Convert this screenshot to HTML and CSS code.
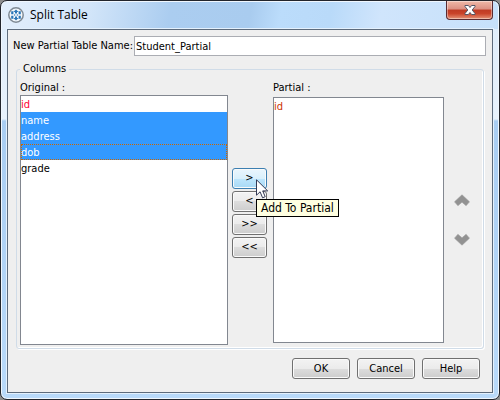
FILE: index.html
```
<!DOCTYPE html>
<html lang="en">
<head>
    <meta charset="UTF-8">
    <meta name="viewport" content="width=device-width, initial-scale=1.0">
    <title>Split Table</title>
    <link rel="stylesheet" href="styles.css">
</head>
<body>
    <div class="window">
        <header class="titlebar">
            <svg class="app-icon" width="16" height="16" viewBox="0 0 16 16">
                <circle cx="8" cy="8" r="7.2" fill="#f4f8fb" stroke="#7f8a94" stroke-width="1.5"/>
                <g fill="#2a76b8">
                    <path d="M8 2.4L10.6 5H9v1.6H7V5H5.4z"/>
                    <path d="M8 13.6L10.6 11H9V9.400H7V11H5.400z"/>
                    <path d="M3.200 4.200h2.200v3H3.200zM10.600 4.200h2.200v3h-2.200zM3.200 8.800h2.200v3H3.200zM10.600 8.800h2.200v3h-2.200z"/>
                    <path d="M6.200 7.200h1v1.600h-1zM8.800 7.200h1v1.600h-1z"/>
                </g>
            </svg>
            <h1>Split Table</h1>
            <button class="close" aria-label="Close">
                <svg width="12" height="10" viewBox="0 0 12 10">
                    <path d="M1 .5h3.400L6 2.500 7.600.5H11v1L8.200 5 11 8.500v1H7.600L6 7.500 4.400 9.500H1v-1L3.800 5 1 1.500z" fill="#fff" stroke="#535666"/>
                </svg>
            </button>
        </header>
        <main class="client">
            <div class="name-row">
                <label for="table-name">New Partial Table Name:</label>
                <input type="text" id="table-name" value="Student_Partial">
            </div>
            <fieldset>
                <legend>Columns</legend>
                <div class="columns">
                    <div class="column">
                        <label for="original">Original :</label>
                        <select id="original" multiple>
                            <option class="key">id</option>
                            <option selected>name</option>
                            <option selected>address</option>
                            <option class="current" selected>dob</option>
                            <option>grade</option>
                        </select>
                    </div>
                    <div class="move">
                        <div class="hovered">
                            <button class="btn active" aria-describedby="tip">&gt;</button>
                            <svg class="cursor" width="13" height="20" viewBox="0 0 13 20">
                                <path d="M.5.800v15.400l3.600-3.400 2.500 6 2.600-1.100-2.500-5.800h5z" fill="#fff" stroke="#333a55"/>
                            </svg>
                            <div class="tooltip" id="tip" role="tooltip">Add To Partial</div>
                        </div>
                        <button class="btn">&lt;</button>
                        <button class="btn">&gt;&gt;</button>
                        <button class="btn">&lt;&lt;</button>
                    </div>
                    <div class="column partial">
                        <label for="partial">Partial :</label>
                        <select id="partial" multiple>
                            <option class="key-partial">id</option>
                        </select>
                    </div>
                    <div class="order">
                        <button aria-label="Move up">
                            <svg width="16" height="13" viewBox="0 0 16 13">
                                <path d="M8 .8l7.500 7-3.400 3.900L8 8.200l-4.100 3.500L.5 7.800z" fill="#929292" stroke="#a0a0a0" stroke-width=".6"/>
                            </svg>
                        </button>
                        <button aria-label="Move down">
                            <svg width="16" height="13" viewBox="0 0 16 13">
                                <path d="M8 12.200l7.500-7-3.400-3.900L8 4.800 3.900 1.300.5 5.200z" fill="#929292" stroke="#a0a0a0" stroke-width=".6"/>
                            </svg>
                        </button>
                    </div>
                </div>
            </fieldset>
            <footer class="actions">
                <button class="btn">OK</button>
                <button class="btn">Cancel</button>
                <button class="btn">Help</button>
            </footer>
        </main>
    </div>
</body>
</html>
```
FILE: styles.css
```
* {
    box-sizing: border-box;
}

body {
    margin: 0;
    background: #8d8d8d;
    color: #000;
    font: 11px/14px "DejaVu Sans Condensed", Tahoma, sans-serif;
}

button, input, select {
    font: inherit;
    color: inherit;
    margin: 0;
}

/* window frame */
.window {
    display: flex;
    flex-direction: column;
    height: 100vh;
    min-height: 400px;
    padding: 0 6px 6px;
    border: 1px solid #22252c;
    border-radius: 7px;
    background:
        linear-gradient(100deg, #e3effc 0, #d2e5f9 18%, #abcdf0 34%, #a9ccef 50%, #bbdcfb 56%, #b9daf9 66%, #d0e5fc 76%, #c6e0fa 100%) 0 0 / 100% 28px no-repeat,
        linear-gradient(#dcebfa 0, #e8f2fc 118px, #a9cdf2 120px, #b9dafa);
    box-shadow: inset 0 0 0 1px #f0f7fe;
}

.titlebar {
    display: flex;
    align-items: flex-start;
    height: 28px;
    padding-left: 1px;
}

.app-icon {
    margin-top: 6px;
}

.titlebar h1 {
    flex: 1;
    margin: 5px 0 0 6px;
    font: 12px/18px "Open Sans", "Segoe UI", sans-serif;
}

.close {
    display: flex;
    align-items: center;
    justify-content: center;
    width: 47px;
    height: 19px;
    padding: 0;
    border: 1px solid #592b32;
    border-top: 0;
    border-radius: 0 0 4px 4px;
    background: linear-gradient(#f0b9a8, #dc9082 45%, #bf3a24 50%, #c9432a 70%, #e59377);
    box-shadow: inset 0 0 0 1px rgba(255, 255, 255, .4);
}

.client {
    flex: 1;
    display: flex;
    flex-direction: column;
    padding: 6px 6px 6px 5px;
    border: 1px solid #5d6b7c;
    background: #efefef;
    box-shadow: 0 0 0 1px #e4f1fd;
}

.name-row {
    display: flex;
    align-items: center;
    gap: 1px;
}

.name-row input {
    flex: 1;
    min-width: 0;
    height: 20px;
    padding: 0 1px;
    border: 1px solid #abadb3;
    background: #fff;
}

/* columns group */
fieldset {
    flex: 1;
    display: flex;
    min-width: 0;
    margin: 6px 2px 0 3px;
    padding: 5px 3px 3px;
    border: 1px solid #d0dce8;
    border-radius: 3px;
    box-shadow: inset -1px -1px #fff, 1px 1px #fff;
}

legend {
    padding: 0 3px;
}

.columns {
    flex: 1;
    display: grid;
    grid-template-columns: 208fr 35px 173fr 27px;
    min-width: 0;
    padding-right: 5px;
    column-gap: 4px;
}

.column {
    display: flex;
    flex-direction: column;
    min-width: 0;
}

.partial {
    padding-left: 2px;
}

.column select {
    flex: 1;
    width: 100%;
    padding: 0;
    border: 1px solid #828790;
    border-radius: 0;
    background: #fff;
    overflow: hidden;
    outline: 0;
}

.partial select {
    margin: 2px 0;
}

option {
    min-height: 16px;
    padding: 2px 0 0;
    line-height: 14px;
}

option:checked {
    background: linear-gradient(#3399ff, #3399ff);
    -webkit-text-fill-color: #fff;
}

option.current {
    outline: 1px dotted #cc6600;
    outline-offset: -1px;
}

.key {
    color: #ff0033;
}

.key-partial {
    color: #cc3300;
}

.move {
    display: flex;
    flex-direction: column;
    justify-content: center;
    gap: 2px;
    padding-bottom: 1px;
}

.btn {
    height: 21px;
    padding: 0;
    border: 1px solid #707070;
    border-radius: 3px;
    background: linear-gradient(#f3f3f3, #ebebeb 50%, #dddddd 50%, #cdcdcd);
    box-shadow: inset 0 0 0 1px #fafafa;
}

.btn.active {
    width: 100%;
    border-color: #3c7fb1;
    background: linear-gradient(#eaf6fd, #d9f0fc 50%, #bee6fd 50%, #a7d9f5);
}

.hovered {
    position: relative;
    height: 21px;
}

.cursor {
    position: absolute;
    top: 11px;
    left: 24px;
    z-index: 2;
}

.tooltip {
    position: absolute;
    top: 31px;
    left: 24px;
    z-index: 1;
    padding: 0 4px;
    border: 1px solid #000;
    background: #ffffe1;
    font-size: 12px;
    line-height: 16px;
    white-space: nowrap;
}

.order {
    display: flex;
    flex-direction: column;
    align-items: center;
    justify-content: center;
    gap: 26px;
    padding-top: 14px;
}

.order button {
    display: flex;
    padding: 0;
    border: 0;
    background: none;
}

.actions {
    display: flex;
    justify-content: flex-end;
    gap: 7px;
    padding: 9px 6px 7px;
}

.actions .btn {
    width: 58px;
}
```
